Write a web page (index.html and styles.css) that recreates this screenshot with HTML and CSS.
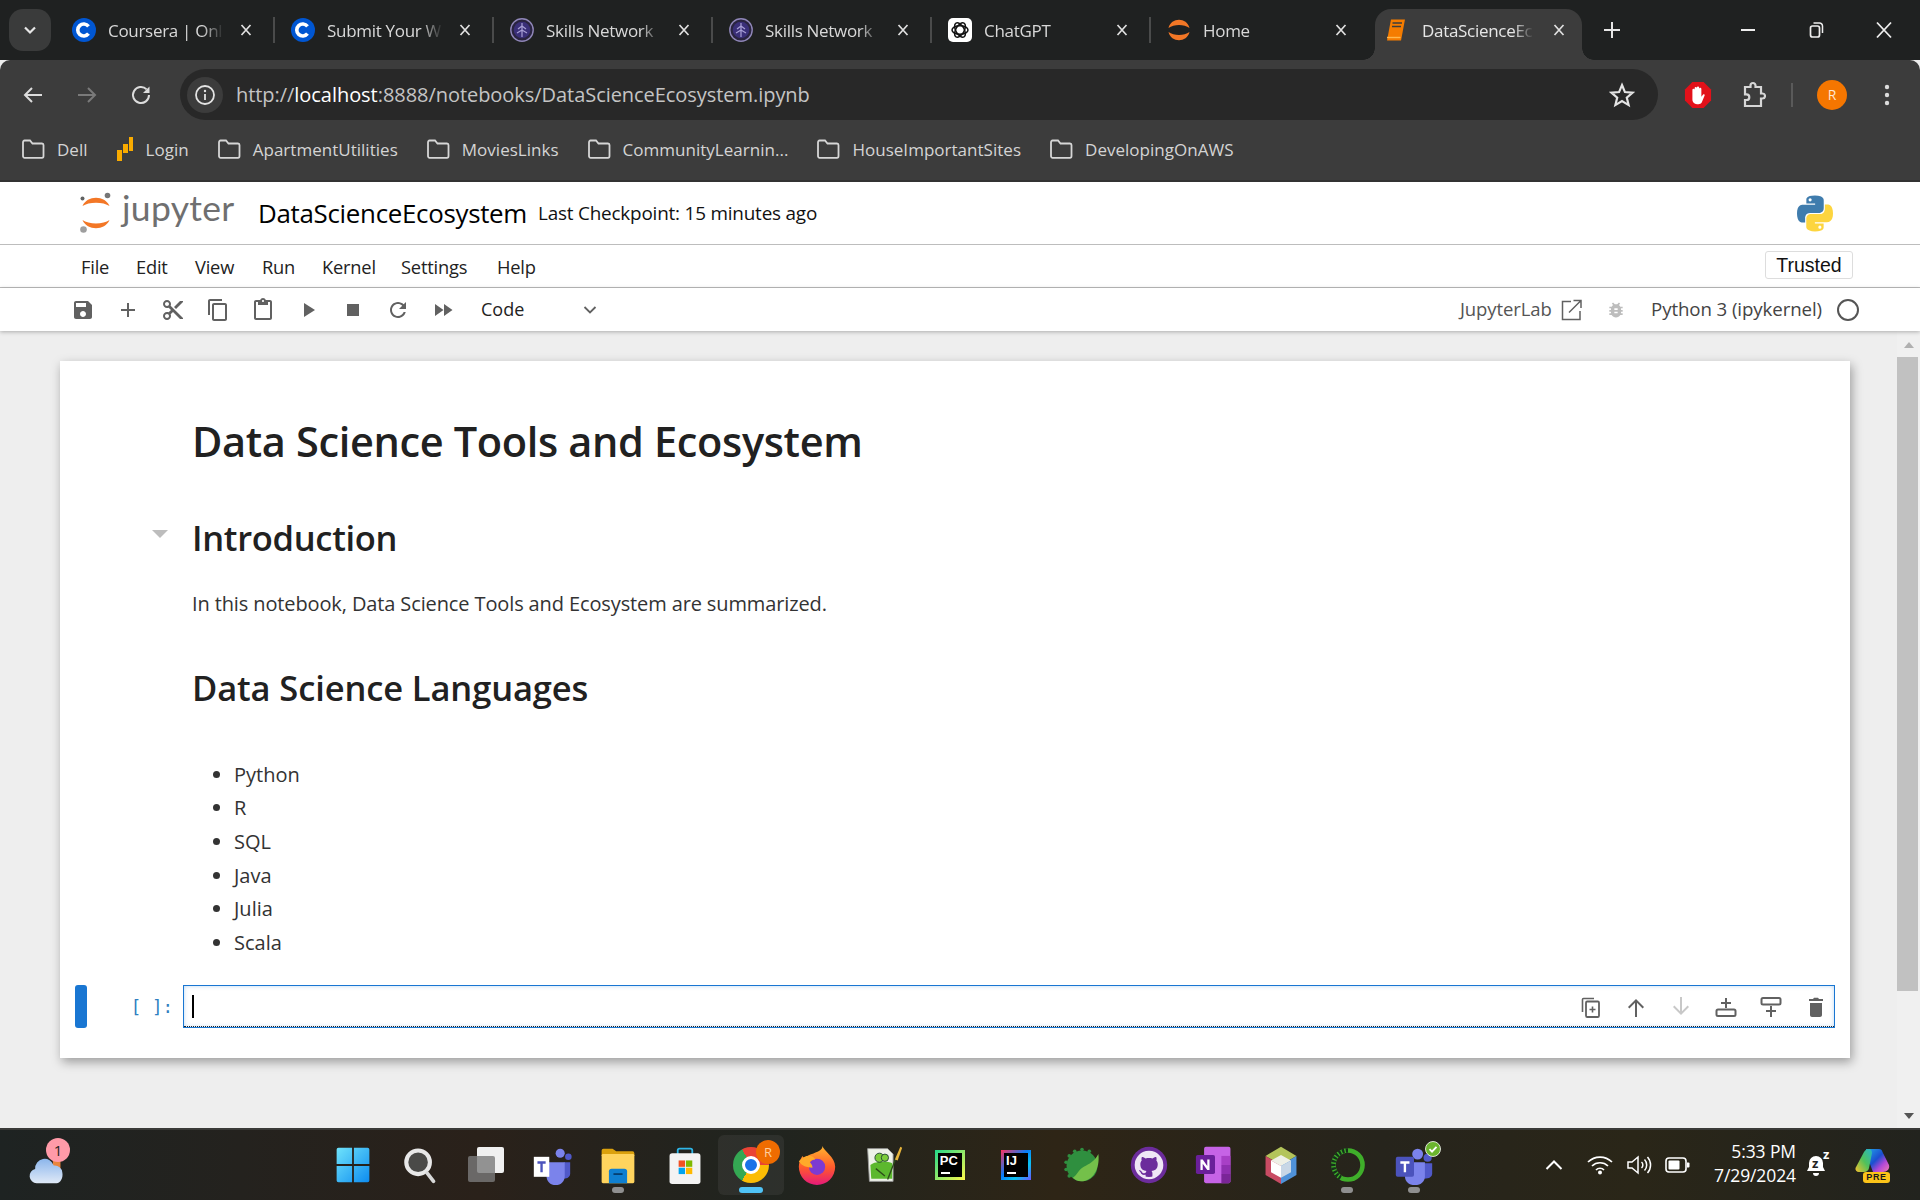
FILE: index.html
```html
<!DOCTYPE html>
<html lang="en">
<head>
<meta charset="utf-8">
<title>DataScienceEcosystem</title>
<link rel="stylesheet" href="styles.css">
</head>
<body>
<svg class="sprite" aria-hidden="true">
  <symbol id="x" viewBox="0 0 12 12"><path d="M1.5 1 10.5 11M10.5 1 1.5 11" fill="none" stroke="currentColor" stroke-width="1.7"/></symbol>
  <symbol id="folder" viewBox="0 0 24 22"><path d="M2 4.5C2 3.4 2.6 2.5 3.6 2.5H9l2.5 3H21c1 0 1.500.7 1.500 1.600V18c0 1-.6 1.800-1.500 1.800H3.600C2.600 19.800 2 19 2 18Z" fill="none" stroke="#d6d6d6" stroke-width="1.800"/></symbol>
  <symbol id="cera" viewBox="0 0 24 24"><circle cx="12" cy="12" r="12" fill="#0056d2"/><path d="M16.500 8.300A6 6 0 1 0 16.500 15.700" fill="none" stroke="#fff" stroke-width="3.600"/></symbol>
  <symbol id="skills" viewBox="0 0 24 24"><circle cx="12" cy="12" r="11.200" fill="#2a2440" stroke="#8f86b8" stroke-width="1.400"/><circle cx="12" cy="12" r="8.300" fill="#3a2f78"/><path d="M12 5v14M12 8 8 11M12 8l4 3M12 12l-5 3M12 12l5 3" stroke="#a89fd6" stroke-width="1.200" fill="none"/></symbol>
  <symbol id="jupfav" viewBox="0 0 24 24"><path d="M1.500 10C4 -1 20 -1 22.500 10 17 6 7 6 1.500 10Z" fill="#f37726"/><path d="M1.500 14C4 25 20 25 22.500 14 17 18 7 18 1.500 14Z" fill="#f37726"/></symbol>
</svg>

<div class="page">

  <header class="tabstrip">
    <button class="tabmenu"><svg width="14" height="10" viewBox="0 0 14 10"><path d="M2 2.500 7 7.500 12 2.500" fill="none" stroke="#e6e6e6" stroke-width="2.200"/></svg></button>
    <div class="tab"><svg class="favicon"><use href="#cera"/></svg><span class="tabtitle">Coursera | Onl</span><svg class="tabx"><use href="#x"/></svg><i class="tabsep"></i></div>
    <div class="tab"><svg class="favicon"><use href="#cera"/></svg><span class="tabtitle">Submit Your W</span><svg class="tabx"><use href="#x"/></svg><i class="tabsep"></i></div>
    <div class="tab"><svg class="favicon"><use href="#skills"/></svg><span class="tabtitle">Skills Network</span><svg class="tabx"><use href="#x"/></svg><i class="tabsep"></i></div>
    <div class="tab"><svg class="favicon"><use href="#skills"/></svg><span class="tabtitle">Skills Network</span><svg class="tabx"><use href="#x"/></svg><i class="tabsep"></i></div>
    <div class="tab"><svg class="favicon" viewBox="0 0 24 24"><rect width="24" height="24" rx="5" fill="#fff"/><g fill="none" stroke="#111" stroke-width="1.500"><ellipse cx="12" cy="12" rx="8" ry="4.200"/><ellipse cx="12" cy="12" rx="8" ry="4.200" transform="rotate(60 12 12)"/><ellipse cx="12" cy="12" rx="8" ry="4.200" transform="rotate(120 12 12)"/></g></svg><span class="tabtitle">ChatGPT</span><svg class="tabx"><use href="#x"/></svg><i class="tabsep"></i></div>
    <div class="tab"><svg class="favicon"><use href="#jupfav"/></svg><span class="tabtitle">Home</span><svg class="tabx"><use href="#x"/></svg><i class="tabsep tabsep-off"></i></div>
    <div class="tab tab-active"><svg class="favicon" viewBox="0 0 24 24"><path d="M7 1.500H21L17 22.500H3Z" fill="#f57c00"/><path d="M8.500 5H18M8 8.500H17" stroke="#3c3c3c" stroke-width="1.300"/><path d="M3 19.500H16.500" stroke="#ffb74d" stroke-width="1.400"/></svg><span class="tabtitle">DataScienceEc</span><svg class="tabx"><use href="#x"/></svg></div>
    <svg class="newtab" width="20" height="20" viewBox="0 0 20 20"><path d="M10 2v16M2 10h16" stroke="#e6e6e6" stroke-width="2"/></svg>
    <div class="winctl">
      <span class="winbtn"><svg width="16" height="16" viewBox="0 0 16 16"><path d="M1 8h14" stroke="#eee" stroke-width="2"/></svg></span>
      <span class="winbtn"><svg width="18" height="18" viewBox="0 0 18 18"><rect x="3.500" y="5" width="9" height="11" rx="2" fill="none" stroke="#eee" stroke-width="1.700"/><path d="M6.500 2h6a3 3 0 0 1 3 3v7" fill="none" stroke="#eee" stroke-width="1.500"/></svg></span>
      <span class="winbtn"><svg width="18" height="18" viewBox="0 0 18 18"><path d="M2 1.500 16 16.500M16 1.500 2 16.500" stroke="#eee" stroke-width="1.800"/></svg></span>
    </div>
  </header>

  <nav class="addressrow">
    <svg class="navic" viewBox="0 0 24 24"><path d="M21 12H4M11 5l-7 7 7 7" fill="none" stroke="#dcdcdc" stroke-width="2"/></svg>
    <svg class="navic" viewBox="0 0 24 24"><path d="M3 12h17M13 5l7 7-7 7" fill="none" stroke="#7a7a7a" stroke-width="2"/></svg>
    <svg class="navic" viewBox="0 0 24 24"><path d="M17.650 6.350A8 8 0 1 0 20 12" fill="none" stroke="#dcdcdc" stroke-width="2"/><path d="M20.500 3.500v6.500H14Z" fill="#dcdcdc"/></svg>
    <div class="omnibox">
      <span class="siteinfo"><svg width="22" height="22" viewBox="0 0 22 22"><circle cx="11" cy="11" r="9" fill="none" stroke="#e4e4e4" stroke-width="1.800"/><path d="M11 10v6" stroke="#e4e4e4" stroke-width="1.800"/><circle cx="11" cy="7" r="1.200" fill="#e4e4e4"/></svg></span>
      <span class="url">http://<b>localhost</b>:8888/notebooks/DataScienceEcosystem.ipynb</span>
      <svg class="star" viewBox="0 0 24 24"><path d="M12 2.800 14.700 9.300 21.800 9.800 16.400 14.400 18.100 21.300 12 17.600 5.900 21.300 7.600 14.400 2.200 9.800 9.300 9.300Z" fill="none" stroke="#e4e4e4" stroke-width="2"/></svg>
    </div>
    <div class="exts">
      <svg class="ext-block" viewBox="0 0 30 30"><path d="M9 1h12l8 8v12l-8 8H9l-8-8V9Z" fill="#e2111a"/><path d="M9 15V9.500a1.200 1.200 0 0 1 2.400 0V14V7.500a1.200 1.200 0 0 1 2.400 0V14V7a1.200 1.200 0 0 1 2.400 0v7V8.500a1.200 1.200 0 0 1 2.400 0V17l1.700-2.300c1-1 2.400 0 1.700 1.200L19 23c-.8 1.200-2 1.800-3.500 1.800h-1.500c-3 0-5-2.300-5-5Z" fill="#fff"/></svg>
      <svg class="ext-puzzle" viewBox="0 0 26 28"><path d="M5 6h5.500V4.500a2.500 2.500 0 0 1 5 0V6H21v6.500h1.500a2.500 2.500 0 0 1 0 5H21V25H5v-6h1.500a2.800 2.800 0 0 0 0-5.600H5Z" fill="none" stroke="#d6d6d6" stroke-width="2.200"/></svg>
      <i class="ext-sep"></i>
      <span class="avatar">R</span>
      <svg class="kebab" viewBox="0 0 6 24"><circle cx="3" cy="4" r="2.200" fill="#dcdcdc"/><circle cx="3" cy="12" r="2.200" fill="#dcdcdc"/><circle cx="3" cy="20" r="2.200" fill="#dcdcdc"/></svg>
    </div>
  </nav>

  <nav class="bookmarks">
    <span class="bm"><svg class="bmic"><use href="#folder"/></svg>Dell</span>
    <span class="bm"><svg class="bmic bmic-login" viewBox="0 0 18 26"><path d="M1 14h5v11H1ZM7 8h5v9H7ZM13 1h4v14h-4Z" fill="#f9ab00"/></svg>Login</span>
    <span class="bm"><svg class="bmic"><use href="#folder"/></svg>ApartmentUtilities</span>
    <span class="bm"><svg class="bmic"><use href="#folder"/></svg>MoviesLinks</span>
    <span class="bm"><svg class="bmic"><use href="#folder"/></svg>CommunityLearnin...</span>
    <span class="bm"><svg class="bmic"><use href="#folder"/></svg>HouseImportantSites</span>
    <span class="bm"><svg class="bmic"><use href="#folder"/></svg>DevelopingOnAWS</span>
  </nav>

  <section class="jp-top">
    <svg class="jp-logo" viewBox="0 0 32 42"><path d="M2.500 14C7 3 25 3 29.500 14 23.500 9.500 8.500 9.500 2.500 14Z" fill="#f37726"/><path d="M2.500 28C7 39 25 39 29.500 28 23.500 32.500 8.500 32.500 2.500 28Z" fill="#f37726"/><circle cx="27.500" cy="3.500" r="2.800" fill="#767677"/><circle cx="3.500" cy="37.500" r="3.300" fill="#9e9e9e"/><circle cx="2.500" cy="6.500" r="2" fill="#616262"/></svg>
    <span class="jp-word">jupyter</span>
    <span class="jp-name">DataScienceEcosystem</span>
    <span class="jp-check">Last Checkpoint: 15 minutes ago</span>
    <svg class="jp-python" viewBox="0 0 110 110"><path fill="#3f7cad" d="M54.900 0C26.800 0 28.600 12.200 28.600 12.200v12.600h26.800v3.800H17.900S0 26.600 0 54.900s15.600 27.300 15.600 27.300h9.300V69.100s-.5-15.600 15.400-15.600h26.500s14.900.2 14.900-14.400V14.900S84.100 0 54.900 0zM40.100 8.500a4.800 4.800 0 1 1 0 9.600 4.800 4.800 0 0 1 0-9.600z"/><path fill="#fdd53f" transform="rotate(180 55 55)" d="M54.900 0C26.800 0 28.600 12.200 28.600 12.200v12.600h26.800v3.800H17.900S0 26.600 0 54.900s15.600 27.300 15.600 27.300h9.300V69.100s-.5-15.600 15.400-15.600h26.500s14.900.2 14.900-14.400V14.900S84.100 0 54.900 0zM40.100 8.500a4.800 4.800 0 1 1 0 9.600 4.800 4.800 0 0 1 0-9.600z"/></svg>
  </section>

  <nav class="jp-menu">
    <span class="mi mi-file">File</span><span class="mi mi-edit">Edit</span><span class="mi mi-view">View</span><span class="mi mi-run">Run</span><span class="mi mi-kernel">Kernel</span><span class="mi mi-settings">Settings</span><span class="mi">Help</span>
    <span class="trusted">Trusted</span>
  </nav>

  <div class="jp-toolbar">
    <svg class="tb" viewBox="0 0 24 24"><path d="M17 3H5c-1.110 0-2 .9-2 2v14c0 1.100.89 2 2 2h14c1.100 0 2-.9 2-2V7l-4-4zm-5 16c-1.660 0-3-1.340-3-3s1.340-3 3-3 3 1.340 3 3-1.340 3-3 3zm3-10H5V5h10v4z"/></svg>
    <svg class="tb" viewBox="0 0 24 24"><path d="M19 13h-6v6h-2v-6H5v-2h6V5h2v6h6v2z"/></svg>
    <svg class="tb" viewBox="0 0 24 24"><path d="M9.640 7.640c.23-.5.36-1.050.36-1.640 0-2.210-1.790-4-4-4S2 3.790 2 6s1.790 4 4 4c.59 0 1.140-.13 1.640-.36L10 12l-2.360 2.360C7.140 14.130 6.590 14 6 14c-2.210 0-4 1.790-4 4s1.790 4 4 4 4-1.790 4-4c0-.59-.13-1.140-.36-1.640L12 14l7 7h3v-1L9.640 7.640zM6 8c-1.100 0-2-.89-2-2s.9-2 2-2 2 .89 2 2-.9 2-2 2zm0 12c-1.100 0-2-.89-2-2s.9-2 2-2 2 .89 2 2-.9 2-2 2zM19 3l-6 6 2 2 7-7V3z"/></svg>
    <svg class="tb" viewBox="0 0 24 24"><path d="M16 1H4c-1.100 0-2 .9-2 2v14h2V3h12V1zm3 4H8c-1.100 0-2 .9-2 2v14c0 1.100.9 2 2 2h11c1.100 0 2-.9 2-2V7c0-1.100-.9-2-2-2zm0 16H8V7h11v14z"/></svg>
    <svg class="tb" viewBox="0 0 24 24"><path d="M19 2h-4.180C14.400.84 13.300 0 12 0c-1.300 0-2.400.84-2.820 2H5c-1.100 0-2 .9-2 2v16c0 1.100.9 2 2 2h14c1.100 0 2-.9 2-2V4c0-1.100-.9-2-2-2zm-7 0c.55 0 1 .45 1 1s-.45 1-1 1-1-.45-1-1 .45-1 1-1zm7 18H5V4h2v3h10V4h2v16z"/></svg>
    <svg class="tb" viewBox="0 0 24 24"><path d="M8 5v14l11-7z"/></svg>
    <svg class="tb" viewBox="0 0 24 24"><path d="M6 6h12v12H6z"/></svg>
    <svg class="tb" viewBox="0 0 24 24"><path d="M17.650 6.350C16.200 4.900 14.210 4 12 4c-4.420 0-7.990 3.580-7.990 8s3.570 8 7.990 8c3.730 0 6.840-2.550 7.730-6h-2.080c-.82 2.330-3.040 4-5.650 4-3.310 0-6-2.690-6-6s2.690-6 6-6c1.660 0 3.140.69 4.220 1.780L13 11h7V4l-2.350 2.350z"/></svg>
    <svg class="tb" viewBox="0 0 24 24"><path d="M4 18l8.500-6L4 6v12zm9-12v12l8.500-6L13 6z"/></svg>
    <span class="celltype">Code</span>
    <svg class="typechev" viewBox="0 0 14 10"><path d="M1.500 2 7 7.500 12.500 2" fill="none" stroke="#616161" stroke-width="1.800"/></svg>
    <span class="lablink">JupyterLab</span>
    <svg class="extlink" viewBox="0 0 24 24"><path d="M12 3.500H3.500V21.500H21V13M14.500 2.500H22V10M22 2.500 10 14.500" fill="none" stroke="#616161" stroke-width="1.500"/></svg>
    <svg class="bug" viewBox="0 0 24 24"><path d="M20 8h-2.810c-.45-.78-1.070-1.450-1.820-1.960L17 4.410 15.590 3l-2.170 2.170C12.960 5.060 12.490 5 12 5c-.49 0-.96.06-1.410.17L8.410 3 7 4.410l1.620 1.630C7.880 6.550 7.260 7.220 6.810 8H4v2h2.090c-.05.33-.09.66-.09 1v1H4v2h2v1c0 .34.04.67.09 1H4v2h2.810c1.040 1.790 2.970 3 5.190 3s4.150-1.210 5.190-3H20v-2h-2.090c.05-.33.09-.66.09-1v-1h2v-2h-2v-1c0-.34-.04-.67-.09-1H20V8zm-6 8h-4v-2h4v2zm0-4h-4v-2h4v2z"/></svg>
    <span class="kernel">Python 3 (ipykernel)</span>
    <i class="kstate"></i>
  </div>

  <main class="jp-main">
    <div class="nbarea">
      <article class="nbcard">
        <div class="md">
          <h1>Data Science Tools and Ecosystem</h1>
          <div class="collapsible">
            <i class="caret"></i>
            <h2>Introduction</h2>
          </div>
          <p>In this notebook, Data Science Tools and Ecosystem are summarized.</p>
          <h3>Data Science Languages</h3>
          <ul>
            <li>Python</li>
            <li>R</li>
            <li>SQL</li>
            <li>Java</li>
            <li>Julia</li>
            <li>Scala</li>
          </ul>
        </div>
        <div class="cell">
          <i class="cellbar"></i>
          <span class="prompt">[ ]:</span>
          <div class="editor">
            <i class="cursor"></i>
            <div class="celltools">
              <svg class="ct" viewBox="0 0 24 24"><path d="M3.500 17V4.500c0-.6.4-1 1-1H15" fill="none" stroke="#616161" stroke-width="1.600"/><rect x="7" y="6.500" width="13" height="15.500" rx="1.200" fill="none" stroke="#616161" stroke-width="1.800"/><path d="M13.500 11.500v6M10.500 14.500h6" stroke="#616161" stroke-width="1.600"/></svg>
              <svg class="ct" viewBox="0 0 24 24"><path d="M4 12l1.410 1.410L11 7.830V22h2V7.830l5.580 5.590L20 12l-8-8-8 8z"/></svg>
              <svg class="ct ct-off" viewBox="0 0 24 24"><path d="M20 12l-1.410-1.410L13 16.170V2h-2v14.170l-5.580-5.590L4 12l8 8 8-8z"/></svg>
              <svg class="ct" viewBox="0 0 24 24"><path d="M11 3h2v4h4v2h-4v4h-2V9H7V7h4z"/><rect x="2.500" y="14.500" width="19" height="6.500" rx="1.500" fill="none" stroke="#616161" stroke-width="2"/></svg>
              <svg class="ct" viewBox="0 0 24 24"><rect x="2.500" y="3" width="19" height="6.500" rx="1.500" fill="none" stroke="#616161" stroke-width="2"/><path d="M11 11h2v4h4v2h-4v5h-2v-5H7v-2h4z"/></svg>
              <svg class="ct" viewBox="0 0 24 24"><path d="M6 20c0 1.100.9 2 2 2h8c1.100 0 2-.9 2-2V8H6v12zM19 4h-4l-1-1.200h-4L9 4H5v2h14V4z"/></svg>
            </div>
          </div>
        </div>
      </article>
    </div>
    <aside class="scrollbar">
      <i class="sb-up"></i>
      <i class="sb-thumb"></i>
      <i class="sb-down"></i>
    </aside>
  </main>

  <footer class="taskbar">
    <div class="weather">
      <svg viewBox="0 0 44 44" class="weather-ic"><rect x="26" y="16" width="8" height="12" fill="#e8843c"/><defs><linearGradient id="cl" x1="0" x2="0" y1="0" y2="1"><stop offset="0" stop-color="#8cb6ec"/><stop offset="1" stop-color="#dfe9f7"/></linearGradient></defs><path d="M9 41a7.500 7.500 0 0 1-1.500-14.800A10 10 0 0 1 27 22.500 8 8 0 0 1 36 30c1 5-2 11-6 11Z" fill="url(#cl)"/></svg>
      <span class="wbadge">1</span>
    </div>
    <div class="apps">
      <span class="app"><svg class="appic" viewBox="0 0 44 44"><defs><linearGradient id="w" x1="0" x2="1" y1="0" y2="1"><stop offset="0" stop-color="#6fe3fb"/><stop offset="1" stop-color="#0d8cf0"/></linearGradient></defs><path d="M4 5a2 2 0 0 1 2-2h15v18H4ZM23 3h15a2 2 0 0 1 2 2v16H23ZM4 23h17v18H6a2 2 0 0 1-2-2ZM23 23h17v16a2 2 0 0 1-2 2H23Z" fill="url(#w)"/></svg></span>
      <span class="app"><svg class="appic" viewBox="0 0 44 44"><circle cx="21" cy="19" r="13" fill="#4a4a48" stroke="#e8e8e8" stroke-width="4.500"/><path d="M31 31l7 9" stroke="#d8d8d8" stroke-width="4" stroke-linecap="round"/></svg></span>
      <span class="app"><svg class="appic" viewBox="0 0 40 40"><rect x="11" y="2" width="27" height="26" rx="2" fill="#f0f0f0"/><rect x="2" y="11" width="27" height="26" rx="2" fill="#7a7a7a" fill-opacity=".8"/></svg></span>
      <span class="app"><svg class="appic" viewBox="0 0 44 44"><circle cx="31" cy="9" r="5" fill="#7b83eb"/><circle cx="40" cy="13" r="3.600" fill="#5059c9"/><path d="M35 19h7v12c0 4-3 6-7 6Z" fill="#5059c9"/><path d="M16 19h20v15c0 6-4 10-10 10s-10-4-10-10Z" fill="#7b83eb"/><rect x="2" y="13" width="17" height="22" fill="#fff"/><path d="M6 18h9v2.500h-3.200V30h-2.600v-9.500H6Z" fill="#4b53bc"/></svg></span>
      <span class="app app-open"><svg class="appic" viewBox="0 0 44 44"><path d="M4 6a2 2 0 0 1 2-2h10l4 3h18a2 2 0 0 1 2 2v3H4Z" fill="#dba10d"/><rect x="4" y="10" width="36" height="32" rx="1.500" fill="#ffd45e"/><path d="M12 29a3 3 0 0 1 3-3h14a3 3 0 0 1 3 3v13H12Z" fill="#0f7fd0"/><rect x="17" y="31" width="10" height="2" fill="#063f70"/></svg></span>
      <span class="app"><svg class="appic" viewBox="0 0 44 44"><path d="M14 11V6a2 2 0 0 1 2-2h12a2 2 0 0 1 2 2v5" fill="none" stroke="#2fb6e8" stroke-width="2"/><rect x="5" y="9" width="34" height="34" rx="3" fill="#f3f3f3"/><rect x="15" y="17" width="7" height="7" fill="#f25022"/><rect x="23" y="17" width="7" height="7" fill="#7fba00"/><rect x="15" y="25" width="7" height="7" fill="#00a4ef"/><rect x="23" y="25" width="7" height="7" fill="#ffb900"/></svg></span>
      <span class="app app-active"><i class="chrome"><i class="chrome-dot"></i></i><span class="chrome-badge">R</span></span>
      <span class="app"><svg class="appic" viewBox="0 0 44 44"><defs><linearGradient id="ff" x1="0" x2="0" y1="0" y2="1"><stop offset="0" stop-color="#ffb52e"/><stop offset=".55" stop-color="#ff5a2c"/><stop offset="1" stop-color="#e5197a"/></linearGradient></defs><path d="M28 1c1 5 14 12 14 23a20 20 0 0 1-40 0c0-5 2-9 4-12l3 4c2-6 9-6 12-8 5-2 7-4 7-7Z" fill="url(#ff)"/><circle cx="22" cy="24" r="9" fill="#7c3ad1"/><path d="M2 18c6-8 16-8 18-2-3 0-5 1-6 3 2 2 3 3 3 6-6 0-12-2-15-7Z" fill="#ffa92a"/></svg></span>
      <span class="app"><svg class="appic" viewBox="0 0 44 44"><path d="M4 4h22l6 6v30H6Z" fill="#eef2e8" stroke="#9a9a9a"/><path d="M7 22c5-4 18-5 24-2v17H8Z" fill="#5cb82e"/><circle cx="17" cy="14" r="5" fill="#7ccd3a" stroke="#243" stroke-width="1"/><circle cx="23" cy="14" r="4" fill="#7ccd3a" stroke="#243" stroke-width="1"/><path d="M13 26l10 8M26 38 36 12" stroke="#2d4d1a" stroke-width="1.500"/><path d="M34 16 40 2l2 1-5 14Z" fill="#e7b43a"/></svg></span>
      <span class="app"><span class="ide ide-pc"><span class="idein">PC<i class="idebar"></i></span></span></span>
      <span class="app"><span class="ide ide-ij"><span class="idein">IJ<i class="idebar"></i></span></span></span>
      <span class="app"><svg class="appic" viewBox="0 0 44 44"><circle cx="22" cy="23" r="17" fill="#2f8f3f"/><g fill="#2f8f3f"><circle cx="22" cy="5" r="2"/><circle cx="30" cy="7" r="2"/><circle cx="14" cy="7" r="2"/><circle cx="8" cy="12" r="2"/><circle cx="4.500" cy="19" r="2"/><circle cx="4.500" cy="27" r="2"/><circle cx="8" cy="34" r="2"/></g><path d="M40 10C42 26 34 40 21 40c-4 0-7-2-9-4 5-3 6-9 12-12 6-3 12-6 16-14Z" fill="#74c04a"/></svg></span>
      <span class="app"><svg class="appic" viewBox="0 0 44 44"><circle cx="22" cy="22" r="20" fill="#6c2c9c"/><circle cx="22" cy="22" r="14.500" fill="none" stroke="#efe6f6" stroke-width="2.500"/><g transform="translate(7 7) scale(1.875)"><path fill="#efe6f6" d="M8 0C3.580 0 0 3.580 0 8c0 3.540 2.290 6.530 5.470 7.590.4.07.55-.17.55-.38 0-.19-.01-.82-.01-1.490-2.010.37-2.530-.49-2.690-.94-.09-.23-.48-.94-.82-1.130-.28-.15-.68-.52-.01-.53.63-.01 1.080.58 1.230.82.72 1.210 1.870.87 2.330.66.07-.52.28-.87.51-1.070-1.780-.2-3.640-.89-3.640-3.950 0-.87.31-1.590.82-2.150-.08-.2-.36-1.020.08-2.120 0 0 .67-.21 2.200.82.64-.18 1.320-.27 2-.27.68 0 1.360.09 2 .27 1.530-1.040 2.200-.82 2.200-.82.44 1.100.16 1.920.08 2.120.51.56.82 1.270.82 2.150 0 3.070-1.870 3.750-3.650 3.950.29.25.54.73.54 1.480 0 1.070-.01 1.930-.01 2.200 0 .21.15.46.55.38A8.013 8.013 0 0016 8c0-4.420-3.580-8-8-8z"/></g></svg></span>
      <span class="app"><svg class="appic" viewBox="0 0 44 44"><path d="M10 4a2 2 0 0 1 2-2h25a2 2 0 0 1 2 2v36a2 2 0 0 1-2 2H12a2 2 0 0 1-2-2Z" fill="#c663e6"/><path d="M29 12h10v10H29Z" fill="#a83fc6"/><path d="M29 22h10v10H29Z" fill="#8f2fb0"/><path d="M29 32h10v8a2 2 0 0 1-2 2h-8Z" fill="#7a2597"/><rect x="1" y="11" width="21" height="21" rx="2" fill="#6a1f9a"/><path d="M6 16h2.500l5 7v-7H16v11.500h-2.500l-5-7v7H6Z" fill="#fff"/></svg></span>
      <span class="app"><svg class="appic" viewBox="0 0 44 44"><path d="M22 2 5 12l17 10 17-10Z" fill="#b3c45a"/><path d="M5 12v21l17 10V22Z" fill="#c84b63"/><path d="M39 12v21L22 43V22Z" fill="#4f92d9"/><path d="M22 11 11 17l11 6 11-6Z" fill="#eef0e6"/><path d="M11 17v13l11 6V23Z" fill="#fff"/><path d="M33 17v13l-11 6V23Z" fill="#c8d7e6"/></svg></span>
      <span class="app app-open"><svg class="appic" viewBox="0 0 44 44"><circle cx="22" cy="22" r="16" fill="none" stroke="#3fae2a" stroke-width="5"/><path d="M22 6A16 16 0 0 0 14 36" fill="none" stroke="#16301a" stroke-width="5" stroke-dasharray="2.500 1.500"/></svg></span>
      <span class="app app-open"><svg class="appic" viewBox="0 0 44 44"><circle cx="26" cy="10" r="6" fill="#7b83eb"/><circle cx="37" cy="14" r="4.500" fill="#5059c9"/><path d="M33 20h9v11c0 4-3 6-9 6Z" fill="#5059c9"/><path d="M12 19h22v15c0 6-4 10-11 10s-11-4-11-10Z" fill="#7b83eb"/><rect x="2" y="13" width="20" height="22" rx="2" fill="#4b53bc"/><path d="M7 18h10v2.500h-3.700V30h-2.600v-9.500H7Z" fill="#fff"/></svg><svg class="teams-ok" viewBox="0 0 16 16"><circle cx="8" cy="8" r="7.500" fill="#6bb52e" stroke="#fff" stroke-width=".8"/><path d="M4.500 8.200 7 10.700 11.500 5.800" fill="none" stroke="#fff" stroke-width="1.800"/></svg></span>
    </div>
    <div class="tray">
      <svg class="tr-chev" viewBox="0 0 18 12"><path d="M1.500 10 9 2.500 16.500 10" fill="none" stroke="#fff" stroke-width="2"/></svg>
      <svg class="tr-wifi" viewBox="0 0 26 20"><g fill="none" stroke="#fff" stroke-width="1.700"><path d="M1 7a17 17 0 0 1 24 0"/><path d="M5 11a11.500 11.500 0 0 1 16 0"/><path d="M9 15a5.500 5.500 0 0 1 8 0"/></g><circle cx="13" cy="17.500" r="2" fill="#fff"/></svg>
      <svg class="tr-vol" viewBox="0 0 26 20"><path d="M1 7h4l6-5v16l-6-5H1Z" fill="none" stroke="#fff" stroke-width="1.500"/><g fill="none" stroke="#fff" stroke-width="1.500"><path d="M14.500 7a4 4 0 0 1 0 6"/><path d="M17.500 4.500a8 8 0 0 1 0 11"/><path d="M20.500 2a12 12 0 0 1 0 16"/></g></svg>
      <svg class="tr-bat" viewBox="0 0 26 18"><rect x="1" y="2" width="20" height="14" rx="3" fill="none" stroke="#fff" stroke-width="1.600"/><rect x="3.500" y="4.500" width="11" height="9" rx="1" fill="#fff"/><path d="M22 6.500h1.500a1 1 0 0 1 1 1v3a1 1 0 0 1-1 1H22Z" fill="#fff"/></svg>
      <div class="clock"><span>5:33 PM</span><span>7/29/2024</span></div>
      <div class="bell"><svg viewBox="0 0 24 24" class="bell-ic"><path d="M10 2a7 7 0 0 0-7 7v4l-2 4h18l-2-4V9a7 7 0 0 0-7-7ZM7 19a3 3 0 0 0 6 0Z" fill="#fff"/></svg><span class="bell-z">z</span><span class="bell-zz">z</span></div>
      <div class="copilot"><svg viewBox="0 0 36 26" class="copilot-ic"><defs><linearGradient id="cpa" x1="0" x2="1" y1="0" y2="1"><stop offset="0" stop-color="#23a6e8"/><stop offset=".45" stop-color="#1b4fd0"/><stop offset=".7" stop-color="#b348d8"/><stop offset="1" stop-color="#f07cb0"/></linearGradient><linearGradient id="cpb" x1="0" x2="1" y1="1" y2="0"><stop offset="0" stop-color="#f6c12c"/><stop offset=".5" stop-color="#50c15a"/><stop offset="1" stop-color="#26b5c8"/></linearGradient></defs><path d="M11 1h13c2 0 3 1 3.500 3L34 17c1 4-2 7-6 7H18L12 8Z" fill="url(#cpa)"/><path d="M9 4c1-2 3-3 5-3 2 0 3 2 3 4l-3 15c-.3 2-2 4-5 4H4c-2.500 0-4-2-3.500-4Z" fill="url(#cpb)"/></svg><span class="pre">PRE</span></div>
    </div>
  </footer>

</div>
</body>
</html>
```

FILE: styles.css
```css
* { box-sizing: border-box; }
html, body { margin: 0; padding: 0; }
body { font-family: "Open Sans", "Noto Sans", sans-serif; background: #eee; }
i { display: block; font-style: normal; }
.sprite { display: none; }

.page { width: 1920px; height: 1200px; display: flex; flex-direction: column; overflow: hidden; }

/* Tab strip */
.tabstrip { height: 60px; flex: none; background: #1f2121; display: flex; align-items: center; padding-left: 9px; color: #d8d8d8; }
.tabmenu { width: 42px; height: 42px; margin-right: 10px; border: 0; border-radius: 14px; background: #3a3b3b; display: flex; align-items: center; justify-content: center; padding: 0; }
.tab { width: 219px; flex: none; height: 51px; margin-top: 9px; display: flex; align-items: center; padding: 0 5px 9px 11px; font-size: 17px; letter-spacing: -.3px; }
.favicon { width: 24px; height: 24px; flex: none; }
.tabtitle { width: 118px; flex: none; margin: 0 14px 0 12px; white-space: nowrap; overflow: hidden; -webkit-mask-image: linear-gradient(90deg, #000 80%, transparent 98%); mask-image: linear-gradient(90deg, #000 80%, transparent 98%); }
.tabx { width: 12px; height: 12px; flex: none; color: #e0e0e0; }
.tabsep { width: 2px; height: 26px; margin-left: 21px; background: #4a4b4b; flex: none; }
.tabsep-off { background: transparent; }
.tab-active { width: 207px; background: #3c3c3c; border-radius: 16px 16px 0 0; position: relative; padding: 0 0 9px 9px; color: #e6e6e6; }
.tab-active::before, .tab-active::after { content: ""; position: absolute; bottom: 0; width: 12px; height: 12px; }
.tab-active::before { left: -12px; background: radial-gradient(circle at 0 0, transparent 11.500px, #3c3c3c 12px); }
.tab-active::after { right: -12px; background: radial-gradient(circle at 100% 0, transparent 11.500px, #3c3c3c 12px); }
.tab-active .tabtitle { width: 114px; margin: 0 17px 0 14px; }
.newtab { margin-left: 20px; flex: none; }
.winctl { margin-left: auto; display: flex; padding-right: 2px; }
.winbtn { width: 68px; height: 40px; display: flex; align-items: center; justify-content: center; }

/* Address row */
.addressrow { height: 60px; flex: none; background: #3c3c3c; border-radius: 10px 10px 0 0; display: flex; align-items: flex-end; padding-left: 21px; }
.navic { width: 24px; height: 24px; margin: 0 30px 13px 0; flex: none; }
.navic:nth-child(3) { margin-right: 27px; }
.omnibox { width: 1478px; height: 51px; background: #282828; border-radius: 26px; display: flex; align-items: center; padding: 0 23px 0 7px; flex: none; }
.siteinfo { width: 36px; height: 36px; border-radius: 50%; background: #3c3c3c; display: flex; align-items: center; justify-content: center; flex: none; }
.url { margin-left: 13px; font-size: 20px; letter-spacing: -.05px; color: #c4c4c4; white-space: nowrap; }
.url b { font-weight: 400; color: #fff; }
.star { width: 26px; height: 26px; margin-left: auto; flex: none; }
.exts { display: flex; align-items: center; height: 51px; margin-left: 26px; flex: none; }
.ext-block { width: 28px; height: 28px; }
.ext-puzzle { width: 26px; height: 28px; margin-left: 28px; }
.ext-sep { width: 2px; height: 24px; background: #5a5a5a; margin-left: 25px; }
.avatar { width: 30px; height: 30px; border-radius: 50%; background: #f57600; color: #ffe7cf; font-size: 14px; display: flex; align-items: center; justify-content: center; margin-left: 24px; }
.kebab { width: 6px; height: 24px; margin-left: 37px; }

/* Bookmarks */
.bookmarks { height: 62px; flex: none; background: #3c3c3c; border-bottom: 2px solid #333; display: flex; align-items: center; gap: 28px; padding: 0 0 2px 21px; font-size: 17px; letter-spacing: .02px; color: #d4d4d4; }
.bm { display: flex; align-items: center; gap: 12px; white-space: nowrap; }
.bmic { width: 24px; height: 22px; flex: none; }
.bmic-login { width: 18px; height: 26px; }

/* Jupyter header */
.jp-top { height: 63px; flex: none; background: #fff; border-bottom: 1px solid #bdbdbd; display: flex; align-items: center; padding-left: 80px; position: relative; }
.jp-logo { width: 32px; height: 42px; flex: none; }
.jp-word { margin-left: 10px; width: 136px; font-family: "Lato", sans-serif; font-size: 35.500px; line-height: 42px; color: #6f6f70; letter-spacing: .3px; padding-bottom: 10px; flex: none; }
.jp-name { font-size: 25.900px; letter-spacing: -.3px; color: #000; white-space: nowrap; }
.jp-check { margin-left: 11px; font-size: 18.900px; letter-spacing: -.2px; color: #111; white-space: nowrap; }
.jp-python { width: 36px; height: 37px; margin-left: auto; margin-right: 87px; flex: none; }

.jp-menu { height: 43px; flex: none; background: #fff; border-bottom: 1px solid #bdbdbd; display: flex; align-items: center; padding: 1px 0 0 81px; font-size: 18.300px; letter-spacing: -.2px; color: #222; }
.mi { flex: none; }
.mi-file { width: 55px; }
.mi-edit { width: 59px; }
.mi-view { width: 67px; }
.mi-run { width: 60px; }
.mi-kernel { width: 79px; }
.mi-settings { width: 96px; }
.trusted { margin: -3px 67px 0 auto; width: 88px; height: 28px; border: 1px solid #ddd; border-radius: 3px; display: flex; align-items: center; justify-content: center; font-family: "Liberation Sans", sans-serif; font-size: 19.500px; letter-spacing: 0; color: #111; }

.jp-toolbar { height: 43px; flex: none; background: #fff; box-shadow: 0 1px 4px rgba(0,0,0,.28); display: flex; align-items: center; padding-left: 71px; position: relative; z-index: 2; }
.tb { width: 24px; height: 24px; margin-right: 21px; fill: #616161; flex: none; }
.celltype { margin-left: 5px; padding-bottom: 2px; font-size: 18px; color: #222; width: 95px; }
.typechev { width: 14px; height: 10px; flex: none; margin-left: 7px; }
.lablink { margin-left: 863px; padding-bottom: 2px; font-size: 18.500px; letter-spacing: -.1px; color: #555; white-space: nowrap; width: 93px; }
.extlink { width: 24px; height: 24px; margin-left: 6px; flex: none; }
.bug { width: 20px; height: 20px; margin-left: 23px; fill: #bdbdbd; flex: none; }
.kernel { margin-left: 25px; padding-bottom: 2px; font-size: 18.700px; letter-spacing: -.1px; color: #444; white-space: nowrap; width: 175px; }
.kstate { width: 22px; height: 22px; margin-left: 11px; border: 2px solid #555; border-radius: 50%; flex: none; }

/* Main */
.jp-main { flex: 1; min-height: 0; display: flex; background: #eee; }
.nbarea { flex: 1; padding: 30px 47px 0 60px; }
.nbcard { background: #fff; height: 697px; box-shadow: 2px 4px 10px rgba(0,0,0,.35); padding-top: 49px; }
.md { padding-left: 132px; color: #212121; }
h1 { margin: 0; font-size: 41.500px; line-height: 62px; font-weight: 600; letter-spacing: -.35px; }
.collapsible { position: relative; margin-top: 41px; }
.caret { position: absolute; left: -40px; top: 17px; width: 0; height: 0; border-left: 8px solid transparent; border-right: 8px solid transparent; border-top: 8px solid #bdbdbd; }
h2 { margin: 0; font-size: 34.500px; line-height: 50px; font-weight: 600; letter-spacing: -.3px; }
p { margin: 24px 0 0; font-size: 20px; line-height: 34px; letter-spacing: -.12px; color: #333; }
h3 { margin: 43px 0 0; font-size: 34.500px; line-height: 48px; font-weight: 600; letter-spacing: -.12px; }
ul { margin: 45.500px 0 0; padding: 0 0 0 42px; font-size: 20px; line-height: 33.700px; color: #333; }
.cell { display: flex; margin: 25.500px 15px 0; height: 43px; }
.cellbar { width: 12px; height: 43px; background: #1976d2; border-radius: 3px; flex: none; }
.prompt { width: 86px; text-align: right; margin: 0 10px 0 0; padding-top: 1px; font-family: "DejaVu Sans Mono", "Liberation Mono", monospace; font-size: 17.500px; line-height: 43px; color: #307fc1; flex: none; white-space: pre; }
.editor { flex: 1; height: 43px; border: 1px solid #1976d2; box-shadow: inset 0 0 4px rgba(25,118,210,.3); display: flex; align-items: center; padding-left: 8px; position: relative; }
.editor::after { content: ""; position: absolute; left: 0; right: 0; bottom: 0; border-top: 1px dotted #222; }
.cursor { width: 2px; height: 23px; background: #000; }
.celltools { margin-left: auto; display: flex; gap: 21px; padding-right: 6px; }
.ct { width: 24px; height: 24px; fill: #616161; flex: none; }
.ct-off { fill: #c8c8c8; }

.scrollbar { width: 23px; flex: none; background: #f0f0f0; display: flex; flex-direction: column; align-items: center; }
.sb-up, .sb-down { width: 0; height: 0; border-left: 5px solid transparent; border-right: 5px solid transparent; }
.sb-up { margin-top: 11px; border-bottom: 6px solid #b0b0b0; }
.sb-thumb { width: 21px; height: 634px; margin: 9px 0 0 -2px; background: #c1c1c1; }
.sb-down { margin-top: auto; margin-bottom: 9px; border-top: 6px solid #555; }

/* Taskbar */
.taskbar { height: 72px; flex: none; background: linear-gradient(90deg, #1e2322 0%, #2a211a 25%, #20241f 40%, #2e2516 55%, #26241c 72%, #2a2618 85%, #22231e 100%); border-top: 2px solid #3a3a38; display: flex; align-items: center; color: #fff; }
.weather { width: 320px; flex: none; padding-left: 28px; position: relative; display: flex; }
.weather-ic { width: 42px; height: 44px; }
.wbadge { position: absolute; left: 46px; top: -5px; width: 24px; height: 24px; border-radius: 50%; background: #ff9aa8; color: #222; font-size: 15px; display: flex; align-items: center; justify-content: center; }
.apps { display: flex; flex: none; }
.app { width: 66.300px; height: 60px; flex: none; display: flex; align-items: center; justify-content: center; position: relative; }
.appic { width: 40px; height: 40px; }
.app-open::after, .app-active::after { content: ""; position: absolute; bottom: 2px; left: 27px; width: 12px; height: 6px; border-radius: 3px; background: #8f8f8f; }
.app-active { background: rgba(255,255,255,.06); border-radius: 6px; }
.app-active::after { left: 21px; width: 24px; background: #4fc3f7; }
.chrome { width: 36px; height: 36px; border-radius: 50%; background: conic-gradient(from -30deg, #ea4335 0 120deg, #fbbc04 120deg 240deg, #34a853 240deg 360deg); display: flex; align-items: center; justify-content: center; }
.chrome-dot { width: 18px; height: 18px; border-radius: 50%; background: #1a73e8; border: 3px solid #fff; }
.chrome-badge { position: absolute; right: 4px; top: 5px; width: 24px; height: 24px; border-radius: 50%; background: #ef6c00; color: #ffcf9f; font-size: 13px; display: flex; align-items: center; justify-content: center; }
.ide { width: 30px; height: 30px; padding: 3px; display: block; }
.ide-pc { background: linear-gradient(135deg, #21d789, #fcf84a); }
.ide-ij { background: linear-gradient(135deg, #fe315d 0%, #087cfa 45%, #07c3f2 70%, #6b57ff 100%); }
.idein { display: block; width: 24px; height: 24px; background: #000; color: #fff; font-family: "Liberation Sans", sans-serif; font-size: 13px; font-weight: 700; line-height: 15px; padding-left: 2px; position: relative; }
.idebar { position: absolute; left: 3px; bottom: 3px; width: 9px; height: 2px; background: #fff; }
.teams-ok { position: absolute; right: 6px; top: 6px; width: 16px; height: 16px; }
.tray { margin-left: auto; display: flex; align-items: center; height: 60px; flex: none; padding-right: 29px; }
.tr-chev { width: 18px; height: 12px; }
.tr-wifi { width: 26px; height: 20px; margin-left: 24px; }
.tr-vol { width: 26px; height: 20px; margin-left: 14px; }
.tr-bat { width: 26px; height: 18px; margin-left: 12px; }
.clock { width: 105px; display: flex; flex-direction: column; align-items: flex-end; font-size: 17.500px; line-height: 24px; white-space: nowrap; letter-spacing: -.1px; padding-bottom: 4px; }
.bell { width: 30px; height: 30px; margin-left: 10px; position: relative; flex: none; }
.bell-ic { width: 24px; height: 24px; position: absolute; left: 0; top: 4px; }
.bell-z { position: absolute; left: 6px; top: 6px; font-size: 13px; line-height: 14px; font-weight: 700; color: #222; }
.bell-zz { position: absolute; left: 17px; top: -3px; font-size: 13px; line-height: 14px; font-weight: 700; color: #fff; }
.copilot { width: 36px; height: 34px; margin-left: 19px; position: relative; flex: none; }
.copilot-ic { width: 36px; height: 26px; display: block; }
.pre { position: absolute; left: 8px; bottom: -1px; width: 27px; height: 11px; background: #fcc419; border-radius: 3px; color: #1a1a1a; font-family: "Liberation Sans", sans-serif; font-size: 9px; line-height: 11px; font-weight: 700; text-align: center; letter-spacing: .6px; }
```
